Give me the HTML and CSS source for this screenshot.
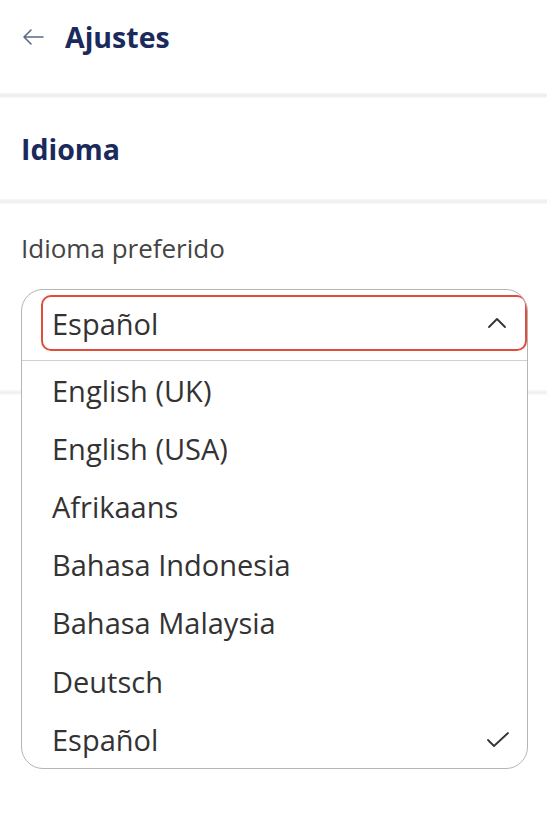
FILE: index.html
```html
<!DOCTYPE html>
<html lang="es">
<head>
<meta charset="utf-8">
<link rel="stylesheet" href="styles.css">
</head>
<body>
<header class="topbar">
  <svg class="back" width="24" height="18" viewBox="0 0 24 18" aria-hidden="true">
    <path d="M22 9H3M10 2L3 9l7 7" fill="none" stroke="#5a6b85" stroke-width="1.6" stroke-linecap="round" stroke-linejoin="round"/>
  </svg>
  <h1 class="title">Ajustes</h1>
</header>
<div class="divider"></div>
<section class="section-head">
  <h2 class="section-title">Idioma</h2>
</section>
<div class="divider"></div>
<section class="content">
  <label class="field-label">Idioma preferido</label>
  <div class="dropdown">
    <div class="selected">
      <span>Español</span>
      <svg class="chev" width="20" height="12" viewBox="0 0 20 12" aria-hidden="true">
        <path d="M2 10L10 2l8 8" fill="none" stroke="#333" stroke-width="1.8" stroke-linecap="round" stroke-linejoin="round"/>
      </svg>
    </div>
    <ul class="options">
      <li>English (UK)</li>
      <li>English (USA)</li>
      <li>Afrikaans</li>
      <li>Bahasa Indonesia</li>
      <li>Bahasa Malaysia</li>
      <li>Deutsch</li>
      <li class="checked">Español
        <svg class="check" width="24" height="18" viewBox="0 0 24 18" aria-hidden="true">
          <path d="M2 9l6 6L22 2" fill="none" stroke="#333" stroke-width="1.8" stroke-linecap="round" stroke-linejoin="round"/>
        </svg>
      </li>
    </ul>
  </div>
</section>
</body>
</html>
```

FILE: styles.css
```css
* { box-sizing: border-box; }
html, body {
  margin: 0;
  padding: 0;
  background: #fff;
  font-family: "Open Sans", "Noto Sans", sans-serif;
  color: #333;
}
.topbar {
  height: 93px;
  display: flex;
  align-items: center;
  padding: 0 21px 20px;
  gap: 20px;
}
.back { flex: none; }
.title {
  margin: 0;
  font-size: 28.5px;
  font-weight: 700;
  color: #1b2a5c;
}
.divider {
  height: 5px;
  background: linear-gradient(#f6f6f6, #eeeeee 50%, #f8f8f8);
}
.section-head {
  height: 101px;
  display: flex;
  align-items: center;
  padding: 0 21px 0;
}
.section-title {
  margin: 0;
  font-size: 28.5px;
  font-weight: 700;
  color: #1b2a5c;
}
.content {
  padding: 26px 19px 40px 21px;
  background:
    linear-gradient(#f8f8f8, #f0f0f0 50%, #fafafa) 0 186px / 100% 5px no-repeat,
    #fff;
}
.field-label {
  display: block;
  font-size: 26px;
  line-height: 36px;
  color: #444;
}
.dropdown {
  margin-top: 23px;
  background: #fff;
  border: 1.5px solid #b5b5b5;
  border-radius: 22px;
  padding: 5px 0 0 19px;
  overflow: hidden;
}
.selected {
  height: 56px;
  border: 2.5px solid #e14d3b;
  border-radius: 10px;
  display: flex;
  align-items: center;
  justify-content: space-between;
  padding: 0 18px 0 9px;
  font-size: 29px;
}
.options {
  list-style: none;
  margin: 9px 0 0 -19px;
  padding: 0 17px 0 30px;
  border-top: 1.5px solid #cfcfcf;
}
.options li {
  height: 58.2px;
  display: flex;
  align-items: center;
  justify-content: space-between;
  font-size: 29px;
}
.check { margin-top: 2px; }
```
